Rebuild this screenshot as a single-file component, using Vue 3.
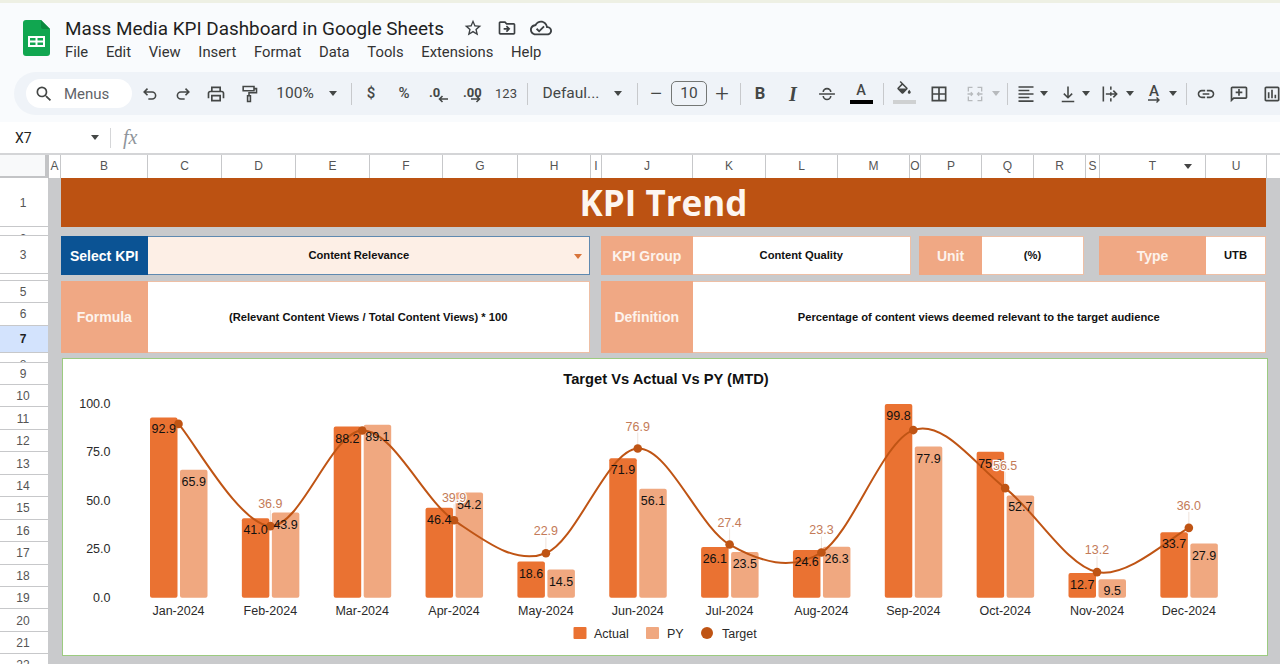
<script setup>
const P = {
  search: 'M15.5 14h-.79l-.28-.27A6.47 6.47 0 0 0 16 9.5 6.5 6.5 0 1 0 9.5 16c1.61 0 3.09-.59 4.23-1.57l.27.28v.79l5 4.99L20.49 19l-4.99-5zm-6 0C7.01 14 5 11.99 5 9.5S7.01 5 9.5 5 14 7.01 14 9.5 11.99 14 9.5 14z',
  star: 'M22 9.24l-7.19-.62L12 2 9.19 8.63 2 9.24l5.46 4.73L5.82 21 12 17.27 18.18 21l-1.63-7.03L22 9.24zM12 15.4l-3.76 2.27 1-4.28-3.32-2.88 4.38-.38L12 6.1l1.71 4.04 4.38.38-3.32 2.88 1 4.28L12 15.4z',
  move: 'M20 6h-8l-2-2H4c-1.11 0-1.99.89-1.99 2L2 18c0 1.11.89 2 2 2h16c1.11 0 2-.89 2-2V8c0-1.11-.89-2-2-2zm0 12H4V6h5.17l2 2H20v10zm-8.01-9l-1.41 1.41L12.16 12H8v2h4.16l-1.59 1.59L11.99 17 16 13.01 11.99 9z',
  cloud: 'M19.35 10.04C18.67 6.59 15.64 4 12 4 9.11 4 6.6 5.64 5.35 8.04 2.34 8.36 0 10.91 0 14c0 3.31 2.69 6 6 6h13c2.76 0 5-2.24 5-5 0-2.64-2.05-4.78-4.65-4.96zM19 18H6c-2.21 0-4-1.79-4-4 0-2.05 1.53-3.76 3.56-3.97l1.07-.11.5-.95C8.08 7.14 9.94 6 12 6c2.62 0 4.88 1.86 5.39 4.43l.3 1.5 1.53.11c1.56.1 2.78 1.41 2.78 2.96 0 1.65-1.35 3-3 3zm-9-3.82l-2.09-2.09L6.5 13.5 10 17l6.01-6.01-1.41-1.41z',
  print: 'M19 8h-1V3H6v5H5c-1.66 0-3 1.34-3 3v6h4v4h12v-4h4v-6c0-1.66-1.34-3-3-3zM8 5h8v3H8V5zm8 14H8v-4h8v4zm2-2v-4H6v4H4v-6c0-.55.45-1 1-1h14c.55 0 1 .45 1 1v6h-2z',
  fill: 'M16.56 8.94L7.62 0 6.21 1.41l2.38 2.38-5.15 5.15c-.59.59-.59 1.54 0 2.12l5.5 5.5c.29.29.68.44 1.06.44s.77-.15 1.06-.44l5.5-5.5c.59-.58.59-1.53 0-2.12zM5.21 10L10 5.21 14.79 10H5.21zM19 11.5s-2 2.17-2 3.5c0 1.1.9 2 2 2s2-.9 2-2c0-1.33-2-3.5-2-3.5z',
  borders: 'M3 3v18h18V3H3zm8 16H5v-6h6v6zm0-8H5V5h6v6zm8 8h-6v-6h6v6zm0-8h-6V5h6v6z',
  link: 'M3.9 12c0-1.71 1.39-3.1 3.1-3.1h4V7H7c-2.76 0-5 2.24-5 5s2.24 5 5 5h4v-1.9H7c-1.71 0-3.1-1.39-3.1-3.1zM8 13h8v-2H8v2zm9-6h-4v1.9h4c1.71 0 3.1 1.39 3.1 3.1s-1.39 3.1-3.1 3.1h-4V17h4c2.76 0 5-2.24 5-5s-2.24-5-5-5z',
  comment: 'M20 3H4c-1.1 0-2 .9-2 2v17l4-4h14c1.1 0 2-.9 2-2V5c0-1.1-.9-2-2-2zm0 13H5.2L4 17.2V5h16v11zM11 14h2v-3h3V9h-3V6h-2v3H8v2h3z',
  chart: 'M9 17H7v-7h2v7zm4 0h-2V7h2v10zm4 0h-2v-4h2v4zm2 2H5V5h14v14zm0-16H5c-1.1 0-2 .9-2 2v14c0 1.1.9 2 2 2h14c1.1 0 2-.9 2-2V5c0-1.1-.9-2-2-2z',
  undo: 'M9 5.5 5 9.5l4 4M5 9.5h9.5a4.2 4.2 0 0 1 0 8.5H10',
  redo: 'M15 5.5l4 4-4 4M19 9.5H9.5a4.2 4.2 0 0 0 0 8.5H14',
  roller: 'M5 3h13v5H5zM18 5.5h3v5h-9v3.5M10.3 14h3.4v7h-3.4z',
  strike: 'M7.5 9.5a4.5 4 0 0 1 9 0M2.5 12h19M7.5 14.5a4.5 4 0 0 0 9 0',
  merge: 'M4 9V4h5M15 4h5v5M4 15v5h5M15 20h5v-5M3 12h6M7 10l2 2-2 2M21 12h-6M17 10l-2 2 2 2',
  align: 'M3 3.5h18M3 7.7h13M3 12h18M3 16.2h13M3 20.5h18',
  valign: 'M12 3v13M7 11.5l5 5 5-5M4.5 21h15',
  wrap: 'M4 3v18M13 3v4M13 10v4M13 17v4M7 12h13M16 8l4 4-4 4'
}
const strokeIcons = ['undo', 'redo', 'roller', 'strike', 'merge', 'align', 'valign', 'wrap']

const raw = [
  { c: 150, w: 20, icon: 'undo' },
  { c: 183, w: 20, icon: 'redo' },
  { c: 216, w: 22, icon: 'print' },
  { c: 249, w: 20, icon: 'roller' },
  { c: 295, w: 44, text: '100%', cls: 'zoomtxt' },
  { c: 333, w: 9, caret: true },
  { c: 351, w: 1, div: true },
  { c: 371, w: 12, text: '$', cls: 'fmt' },
  { c: 404, w: 16, text: '%', cls: 'fmt' },
  { c: 438, w: 24, text: '.0', cls: 'dec dec1', arrow: 'left' },
  { c: 472, w: 26, text: '.00', cls: 'dec dec2', arrow: 'right' },
  { c: 506, w: 26, text: '123', cls: 'num' },
  { c: 527, w: 1, div: true },
  { c: 571, w: 60, text: 'Defaul...', cls: 'zoomtxt' },
  { c: 618, w: 9, caret: true },
  { c: 637, w: 1, div: true },
  { c: 656, w: 16, text: '−', cls: 'plus' },
  { c: 689, w: 36, text: '10', cls: 'sizebox' },
  { c: 722, w: 16, text: '+', cls: 'plus' },
  { c: 740, w: 1, div: true },
  { c: 760, w: 16, text: 'B', cls: 'bold' },
  { c: 793, w: 16, text: 'I', cls: 'ital' },
  { c: 827, w: 20, icon: 'strike' },
  { c: 861, w: 24, text: 'A', cls: 'colora', bar: 'black' },
  { c: 883, w: 1, div: true },
  { c: 904, w: 24, icon: 'fill', bar: 'gray', cls: 'fillc' },
  { c: 939, w: 20, icon: 'borders' },
  { c: 975, w: 20, icon: 'merge', cls: 'off' },
  { c: 996, w: 9, caret: true, cls: 'off' },
  { c: 1007, w: 1, div: true },
  { c: 1026, w: 20, icon: 'align' },
  { c: 1044, w: 9, caret: true },
  { c: 1068, w: 20, icon: 'valign' },
  { c: 1086, w: 9, caret: true },
  { c: 1110, w: 20, icon: 'wrap' },
  { c: 1130, w: 9, caret: true },
  { c: 1154, w: 20, text: 'A', cls: 'rota', arrow: 'rot' },
  { c: 1173, w: 9, caret: true },
  { c: 1186, w: 1, div: true },
  { c: 1206, w: 22, icon: 'link' },
  { c: 1239, w: 22, icon: 'comment' },
  { c: 1272, w: 22, icon: 'chart' }
]
let edge = 132
const tools = raw.map((t) => {
  const left = t.c - t.w / 2
  const gap = left - edge
  edge = left + t.w
  return { ...t, gap }
})

const menus = ['File', 'Edit', 'View', 'Insert', 'Format', 'Data', 'Tools', 'Extensions', 'Help']

const cols = [
  ['A', 12], ['B', 87], ['C', 74], ['D', 74], ['E', 74], ['F', 73], ['G', 75], ['H', 73], ['I', 11],
  ['J', 91], ['K', 73], ['L', 72], ['M', 72], ['O', 11], ['P', 61], ['Q', 52], ['R', 52], ['S', 14],
  ['T', 106], ['U', 61]
]
const rows = [
  ['1', 49], ['2', 9], ['3', 38], ['4', 7], ['5', 22], ['6', 22.5], ['7', 27.5], ['8', 10], ['9', 22],
  ...Array.from({ length: 12 }, (_, i) => [String(10 + i), 22.45]),
  ['22', 22]
]

const base = 597.7
const scale = 1.94
const yOf = (v) => base - v * scale
const months = ['Jan', 'Feb', 'Mar', 'Apr', 'May', 'Jun', 'Jul', 'Aug', 'Sep', 'Oct', 'Nov', 'Dec']
const actual = [92.9, 41.0, 88.2, 46.4, 18.6, 71.9, 26.1, 24.6, 99.8, 75.2, 12.7, 33.7]
const py = [65.9, 43.9, 89.1, 54.2, 14.5, 56.1, 23.5, 26.3, 77.9, 52.7, 9.5, 27.9]
const target = [89.6, 36.9, 86.2, 39.9, 22.9, 76.9, 27.4, 23.3, 86.4, 56.5, 13.2, 36.0]
const hideLabel = [0, 2, 8]

const groups = months.map((m, i) => {
  const c = 178.5 + i * 91.85
  return {
    name: `${m}-2024`, c,
    aX: c - 28.5, pX: c + 1.5,
    a: actual[i], p: py[i], t: target[i],
    aY: yOf(actual[i]), pY: yOf(py[i]), tY: yOf(target[i]),
    showT: !hideLabel.includes(i)
  }
})

const pts = groups.map((g) => [g.c, g.tY])
let curve = `M${pts[0][0]} ${pts[0][1]}`
for (let i = 0; i < pts.length - 1; i++) {
  const p0 = pts[i - 1] || pts[i]
  const p1 = pts[i]
  const p2 = pts[i + 1]
  const p3 = pts[i + 2] || p2
  const c1x = p1[0] + (p2[0] - p0[0]) / 6
  const c1y = p1[1] + (p2[1] - p0[1]) / 6
  const c2x = p2[0] - (p3[0] - p1[0]) / 6
  const c2y = p2[1] - (p3[1] - p1[1]) / 6
  curve += ` C${c1x} ${c1y} ${c2x} ${c2y} ${p2[0]} ${p2[1]}`
}
const ticks = [100, 75, 50, 25, 0].map((v) => ({ v: v.toFixed(1), y: yOf(v) + 1 }))
</script>

<template>
  <div class="app">
    <div class="topline"></div>
    <header class="head">
      <svg class="logo" viewBox="0 0 27 36">
        <path d="M3 0h15l9 9v24a3 3 0 0 1-3 3H3a3 3 0 0 1-3-3V3a3 3 0 0 1 3-3z" fill="#11a650" />
        <path d="M18 0l9 9h-7a2 2 0 0 1-2-2z" fill="#0b8a3f" />
        <path d="M5 16h17v11H5z M7 18v2.5h5.5V18z M14.5 18v2.5H20V18z M7 22.5V25h5.5v-2.5z M14.5 22.5V25H20v-2.5z" fill="#fff" fill-rule="evenodd" />
      </svg>
      <div class="titles">
        <div class="titleline">
          <span class="doc">Mass Media KPI Dashboard in Google Sheets</span>
          <svg class="hicon star" viewBox="0 0 24 24"><path :d="P.star" /></svg>
          <svg class="hicon mv" viewBox="0 0 24 24"><path :d="P.move" /></svg>
          <svg class="hicon cl" viewBox="0 0 24 24"><path :d="P.cloud" /></svg>
        </div>
        <nav class="menu"><span v-for="m in menus" :key="m">{{ m }}</span></nav>
      </div>
    </header>

    <div class="toolbarwrap">
      <div class="toolbar">
        <div class="chip">
          <svg class="searchic" viewBox="0 0 24 24"><path :d="P.search" /></svg>
          <span>Menus</span>
        </div>
        <div
          v-for="(t, i) in tools"
          :key="i"
          class="tool"
          :class="t.cls"
          :style="{ marginLeft: t.gap + 'px', width: t.w + 'px' }"
        >
          <i v-if="t.div" class="divider"></i>
          <i v-else-if="t.caret" class="caret"></i>
          <template v-else>
            <svg
              v-if="t.icon"
              class="ticon"
              :class="{ stroked: strokeIcons.includes(t.icon) }"
              viewBox="0 0 24 24"
            ><path :d="P[t.icon]" /></svg>
            <span v-else class="ttext">{{ t.text }}</span>
            <svg v-if="t.arrow === 'left'" class="arr" viewBox="0 0 10 8"><path d="M10 4H1.5M4.5 1 1.5 4l3 3" /></svg>
            <svg v-if="t.arrow === 'right'" class="arr" viewBox="0 0 10 8"><path d="M0 4h8.5M5.5 1l3 3-3 3" /></svg>
            <svg v-if="t.arrow === 'rot'" class="arr rot" viewBox="0 0 14 8"><path d="M1 3h11M9.5 0.5 12 3 9.5 5.5" /></svg>
            <i v-if="t.bar" class="bar" :class="t.bar"></i>
          </template>
        </div>
      </div>
    </div>

    <div class="fbar">
      <span class="cellname">X7</span>
      <i class="caret fcaret"></i>
      <i class="fdiv"></i>
      <span class="fx">fx</span>
    </div>

    <div class="colhead">
      <div class="corner"></div>
      <div v-for="c in cols" :key="c[0]" class="col" :style="{ width: c[1] + 'px' }">
        {{ c[0] }}
        <i v-if="c[0] === 'T'" class="caret tcaret"></i>
      </div>
    </div>

    <div class="sheet">
      <div class="rowhead">
        <div
          v-for="r in rows"
          :key="r[0]"
          class="row"
          :class="{ active: r[0] === '7', thin: r[1] < 11 }"
          :style="{ height: r[1] + 'px' }"
        >{{ r[0] }}</div>
      </div>

      <main class="canvas">
        <div class="banner">KPI Trend</div>

        <div class="line3">
          <div class="kv kv-select">
            <div class="lab blue">Select KPI</div>
            <div class="val sel">Content Relevance<i class="caret selcaret"></i></div>
          </div>
          <div class="kv kv-group">
            <div class="lab">KPI Group</div>
            <div class="val">Content Quality</div>
          </div>
          <div class="kv kv-unit">
            <div class="lab">Unit</div>
            <div class="val">(%)</div>
          </div>
          <div class="kv kv-type">
            <div class="lab">Type</div>
            <div class="val">UTB</div>
          </div>
        </div>

        <div class="line4">
          <div class="kv kv-select">
            <div class="lab">Formula</div>
            <div class="val">(Relevant Content Views / Total Content Views) * 100</div>
          </div>
          <div class="kv kv-def">
            <div class="lab">Definition</div>
            <div class="val">Percentage of content views deemed relevant to the target audience</div>
          </div>
        </div>

        <section class="card">
          <svg class="plot" viewBox="63 359 1204 296">
            <text class="ctitle" x="666" y="384" text-anchor="middle">Target Vs Actual Vs PY (MTD)</text>
            <text v-for="t in ticks" :key="t.v" class="axis" x="110.5" :y="t.y" text-anchor="end" dominant-baseline="middle">{{ t.v }}</text>
            <g v-for="g in groups" :key="g.name">
              <rect class="b-a" :x="g.aX" :y="g.aY" width="27.5" :height="base - g.aY" rx="2" />
              <rect class="b-p" :x="g.pX" :y="g.pY" width="27.5" :height="base - g.pY" rx="2" />
              <text class="axis" :x="g.c" y="615" text-anchor="middle">{{ g.name }}</text>
            </g>
            <g v-for="g in groups" :key="'l' + g.name">
              <line v-if="g.showT" class="leader" :x1="g.c" :x2="g.c" :y1="g.tY" :y2="g.tY - 16" />
            </g>
            <path class="curve" :d="curve" />
            <circle v-for="g in groups" :key="'d' + g.name" class="dot" :cx="g.c" :cy="g.tY" r="4.3" />
            <g v-for="g in groups" :key="'v' + g.name">
              <text class="val-l" :x="g.aX + 13.7" :y="g.aY + 16" text-anchor="middle">{{ g.a.toFixed(1) }}</text>
              <text class="val-l" :x="g.pX + 13.7" :y="g.pY + 16" text-anchor="middle">{{ g.p.toFixed(1) }}</text>
            </g>
            <g v-for="g in groups" :key="'t' + g.name">
              <text v-if="g.showT" class="val-t" :x="g.c" :y="g.tY - 18" text-anchor="middle">{{ g.t.toFixed(1) }}</text>
            </g>
            <rect class="b-a" x="573.5" y="627" width="13" height="12" rx="1" />
            <text class="axis" x="594" y="638">Actual</text>
            <rect class="b-p" x="646" y="627" width="13" height="12" rx="1" />
            <text class="axis" x="667" y="638">PY</text>
            <circle class="dot" cx="707" cy="633" r="6" />
            <text class="axis" x="722" y="638">Target</text>
          </svg>
        </section>
      </main>
    </div>
  </div>
</template>

<style>
html, body { margin: 0; background: #c9cacc; overflow: hidden; }
</style>

<style scoped>
.app {
  width: 1280px;
  height: 664px;
  overflow: hidden;
  background: #fff;
  font-family: "Liberation Sans", Arial, sans-serif;
  color: #222;
}
.topline { height: 3px; background: #eef0e4; }

.head {
  height: 69px;
  box-sizing: border-box;
  background: #f9fbfd;
  display: flex;
  padding: 17px 0 0 23px;
}
.logo { width: 27px; height: 36px; flex: none; }
.titles { margin-left: 15px; margin-top: -4px; }
.titleline { display: flex; align-items: center; height: 24px; }
.doc {
  font-family: Roboto, sans-serif;
  font-size: 18.9px;
  color: #1f1f1f;
  white-space: nowrap;
  width: 379px;
  flex: none;
}
.hicon { width: 20px; height: 20px; fill: #3c4043; flex: none; }
.star { margin-left: 19px; }
.mv { margin-left: 14px; }
.cl { margin-left: 13px; width: 22px; height: 22px; }
.menu {
  display: flex;
  gap: 17.7px;
  margin-top: 2px;
  font-family: Roboto, sans-serif;
  font-size: 14.8px;
  color: #333;
  line-height: 20px;
}

.toolbarwrap { background: #f9fbfd; height: 50px; padding-left: 14px; box-sizing: border-box; }
.toolbar {
  width: 1266px;
  height: 43px;
  background: #eff3f8;
  border-radius: 22px 0 0 22px;
  display: flex;
  align-items: center;
  padding-left: 12px;
  box-sizing: border-box;
  overflow: hidden;
}
.chip {
  width: 106px;
  height: 29px;
  flex: none;
  border-radius: 15px;
  background: #fff;
  display: flex;
  align-items: center;
  box-sizing: border-box;
  padding-left: 8px;
  font-family: Roboto, sans-serif;
  font-size: 15px;
  color: #5f6368;
}
.searchic { width: 20px; height: 20px; fill: #444746; margin-right: 10px; }

.tool {
  flex: none;
  height: 32px;
  display: flex;
  flex-direction: column;
  align-items: center;
  justify-content: center;
  color: #444746;
  font-family: Roboto, sans-serif;
  position: relative;
}
.ticon { width: 20px; height: 20px; fill: #444746; flex: none; }
.ticon.stroked { fill: none; stroke: #444746; stroke-width: 1.9; }
.divider { width: 1px; height: 22px; background: #c7c9cc; display: block; }
.caret {
  display: block;
  width: 0;
  height: 0;
  border-left: 4.5px solid transparent;
  border-right: 4.5px solid transparent;
  border-top: 5px solid #444746;
}
.off .ticon.stroked { stroke: #b7babd; stroke-width: 1.6; }
.off .caret { border-top-color: #b7babd; }
.ttext { white-space: nowrap; line-height: 1; }
.zoomtxt .ttext { font-size: 15.5px; }
.fmt .ttext { font-size: 15px; font-weight: 500; }
.dec { justify-content: flex-start; align-items: flex-start; padding-top: 8px; box-sizing: border-box; }
.dec1 { padding-left: 3px; }
.dec2 { padding-left: 4px; }
.dec .ttext { font-size: 13px; font-weight: 700; }
.arr { width: 10px; height: 8px; fill: none; stroke: #444746; stroke-width: 1.6; margin-top: -3.5px; flex: none; }
.dec1 .arr { margin-left: 9px; }
.dec2 .arr { margin-left: 8px; }
.num .ttext { font-size: 13px; }
.plus .ttext { font-size: 24px; font-weight: 300; line-height: 24px; }
.sizebox {
  height: 25px;
  box-sizing: border-box;
  border: 1px solid #747775;
  border-radius: 5px;
}
.sizebox .ttext { font-size: 15.5px; }
.bold .ttext { font-size: 16.5px; font-weight: 700; margin-top: 2px; }
.ital .ttext { font-family: "Liberation Serif", serif; font-style: italic; font-weight: 700; font-size: 20px; margin-top: 1px; }
.colora .ttext { font-size: 14.5px; font-weight: 500; margin-top: 1px; }
.bar { display: block; height: 4px; width: 23px; flex: none; }
.bar.black { background: #000; margin-top: 1px; }
.bar.gray { background: #cfd1d2; margin-top: 1px; height: 3.5px; }
.fillc .ticon { width: 18px; height: 18px; margin-top: -2px; }
.rota .ttext { font-size: 15px; font-weight: 500; margin-top: 2px; }
.arr.rot { width: 14px; margin-top: -2px; stroke-width: 1.4; }

.fbar {
  height: 31px;
  background: #fff;
  display: flex;
  align-items: center;
  position: relative;
  padding-left: 15px;
  box-sizing: border-box;
}
.cellname { width: 76px; font-family: Roboto, sans-serif; font-size: 14px; color: #222; }
.fcaret { flex: none; }
.fdiv { display: block; width: 1px; height: 20px; background: #d5d6d8; margin-left: 11px; }
.fx {
  margin-left: 12px;
  font-family: "Liberation Serif", serif;
  font-style: italic;
  font-size: 20px;
  color: #8f959b;
}

.colhead {
  height: 25px;
  display: flex;
  background: #fff;
  border-top: 2px solid #d4d5d7;
  box-sizing: border-box;
}
.corner {
  width: 45px;
  flex: none;
  box-sizing: content-box;
  background: #f8f9fa;
  border-right: 4px solid #c3c4c6;
  border-bottom: 3px solid #c3c4c6;
  margin-bottom: -1px;
  height: 21px;
}
.col {
  flex: none;
  box-sizing: border-box;
  border-right: 1px solid #c7c8ca;
  font-size: 12px;
  color: #555;
  text-align: center;
  line-height: 23px;
  position: relative;
  overflow: hidden;
}
.tcaret { position: absolute; right: 13px; top: 9px; border-top-color: #444; border-left-width: 4px; border-right-width: 4px; }

.sheet { display: flex; height: 486px; background: #c9cacc; }
.rowhead { width: 48px; flex: none; background: #fff; overflow: hidden; }
.row {
  box-sizing: border-box;
  border-bottom: 1px solid #c7c8ca;
  font-size: 12px;
  color: #555;
  display: flex;
  justify-content: center;
  align-items: center;
  overflow: hidden;
  padding-top: 1px;
  padding-right: 2px;
}
.row.thin { align-items: flex-start; padding-top: 5px; }
.row.active { background: #d3e3fd; color: #1f1f1f; font-weight: 700; }

.canvas { padding-left: 13px; flex: none; width: 1219px; box-sizing: border-box; }
.banner {
  height: 49px;
  width: 1205px;
  background: #bc5212;
  color: #fdf6f0;
  font-family: "Open Sans", sans-serif;
  font-weight: 700;
  font-size: 35px;
  text-align: center;
  line-height: 49px;
}
.line3 { display: flex; margin-top: 9px; height: 39px; width: 1205px; }
.line4 { display: flex; margin-top: 6px; height: 72px; width: 1205px; }
.kv { display: flex; flex: none; height: 100%; }
.kv-select { width: 529px; }
.kv-group { width: 310px; margin-left: 11px; }
.kv-unit { width: 165px; margin-left: 8px; }
.kv-type { width: 167px; margin-left: 15px; }
.kv-def { width: 665px; margin-left: 11px; }
.lab {
  flex: none;
  display: flex;
  align-items: center;
  justify-content: center;
  background: #f0a884;
  color: #fdf3ec;
  font-weight: 700;
  font-size: 14px;
}
.lab.blue { background: #0b5394; color: #fff; }
.kv-select .lab { width: 86.5px; }
.kv-group .lab, .kv-def .lab { width: 91.5px; }
.kv-unit .lab { width: 63px; }
.kv-type .lab { width: 107px; }
.val {
  flex: 1;
  display: flex;
  align-items: center;
  justify-content: center;
  background: #fff;
  box-sizing: border-box;
  border: 1px solid #eebfa5;
  border-left: 0;
  font-size: 11.2px;
  font-weight: 700;
  color: #111;
  position: relative;
  padding-bottom: 1px;
}
.val.sel { background: #fdefe6; border: 1px solid #5f89b0; border-left: 0; padding-right: 19px; }
.selcaret {
  position: absolute;
  right: 7px;
  top: 17px;
  border-top-color: #d8743a;
  border-left-width: 4px;
  border-right-width: 4px;
}

.card {
  margin: 5px 0 0 1px;
  width: 1206px;
  height: 298px;
  box-sizing: border-box;
  background: #fff;
  border: 1px solid #9ccb80;
}
.plot { display: block; width: 1204px; height: 296px; font-family: "Liberation Sans", Arial, sans-serif; }
.ctitle { font-size: 14.7px; font-weight: 700; fill: #111; }
.axis { font-size: 12.5px; fill: #2a2a2a; }
.b-a { fill: #ea7232; }
.b-p { fill: #f0a880; }
.curve { fill: none; stroke: #bf5414; stroke-width: 2; }
.dot { fill: #bf5414; }
.leader { stroke: #efe2da; stroke-width: 1; }
.val-l { font-size: 12.5px; fill: #111; }
.val-t {
  font-size: 12.5px;
  fill: #c47b58;
  stroke: #fff;
  stroke-width: 2.5px;
  paint-order: stroke;
}
</style>
